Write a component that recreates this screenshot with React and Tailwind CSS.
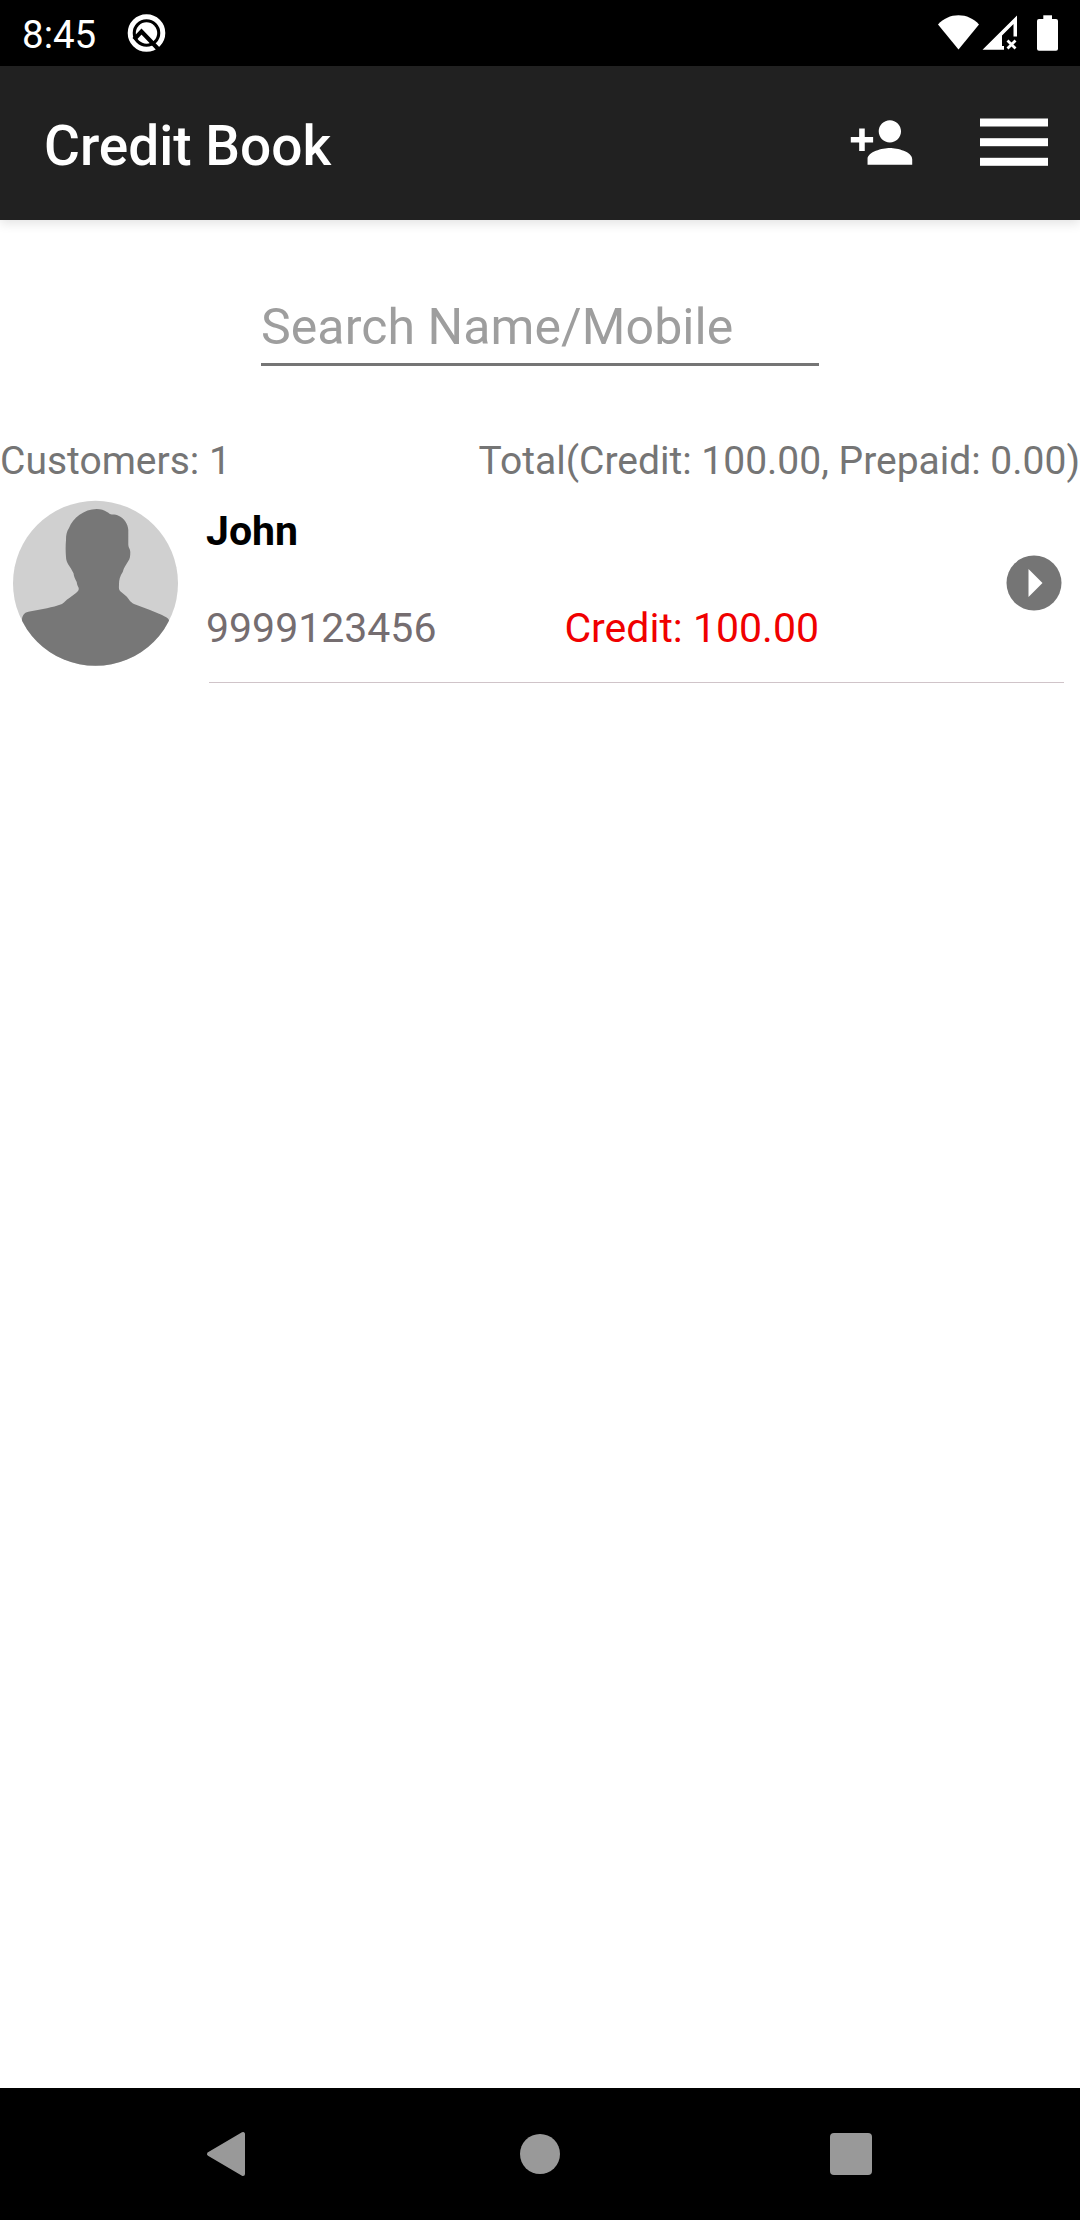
const customers = [
  { id: 1, name: 'John', mobile: '9999123456', balance: 'Credit: 100.00' },
];

function StatusBar() {
  return (
    <div className="flex h-[66px] shrink-0 items-start bg-black text-white">
      <span className="ml-[22px] mt-3 text-[38.5px] leading-[45px]">8:45</span>
      <svg className="ml-[30px] mt-3.5" width="40" height="40" viewBox="0 0 40 40">
        <circle cx="20.5" cy="19" r="16.3" fill="none" stroke="#fff" strokeWidth="5" />
        <circle cx="20.5" cy="19" r="10.7" fill="#fff" />
        <path d="M8 25.5L15.5 17.5L36 39" fill="none" stroke="#000" strokeWidth="4.2" />
      </svg>
      <div className="ml-auto mr-[22px] mt-[15px] flex items-start">
        {/* wifi */}
        <svg width="41" height="35" viewBox="0 0 41 35">
          <path d="M0 9.5C5.5 3.6 12.5 0.3 20.5 0.3S35.5 3.6 41 9.5L20.5 34.5Z" fill="#fff" />
        </svg>
        {/* mobile signal, no service */}
        <svg className="ml-[3px]" width="36" height="36" viewBox="0 0 36 36">
          <path d="M35 0.5V21.5H31.5V9L20 20.5V31H22V34.8H0.5Z" fill="#fff" />
          <path d="M25.5 25.5L33.5 33.5M33.5 25.5L25.5 33.5" stroke="#fff" strokeWidth="2.8" />
        </svg>
        {/* battery */}
        <svg className="ml-[19px]" width="21" height="36" viewBox="0 0 21 36">
          <rect x="6.3" y="0.3" width="8.7" height="6" fill="#fff" />
          <rect x="0" y="4" width="21" height="31.7" rx="2" fill="#fff" />
        </svg>
      </div>
    </div>
  );
}

function AppBar() {
  return (
    <header className="flex h-[154px] shrink-0 items-center bg-[#212121] pl-11 pr-8 text-white shadow-[0_3px_11px_rgba(0,0,0,0.12)]">
      <h1 className="mt-1.5 text-[55px] font-medium leading-[64px]">Credit Book</h1>
      <svg className="-mt-px ml-auto" width="67" height="67" viewBox="0 0 24 24" fill="#fff">
        <path d="M15 12c2.21 0 4-1.79 4-4s-1.79-4-4-4-4 1.79-4 4 1.79 4 4 4zm-9-2V7H4v3H1v2h3v3h2v-3h3v-2H6zm9 4c-2.67 0-8 1.34-8 4v2h16v-2c0-2.66-5.33-4-8-4z" />
      </svg>
      <svg className="-mt-0.5 ml-16" width="69" height="48" viewBox="0 0 69 48" fill="#fff">
        <rect x="1" y="0.5" width="68" height="8" />
        <rect x="1" y="20.2" width="68" height="8" />
        <rect x="1" y="39.8" width="68" height="8" />
      </svg>
    </header>
  );
}

function Avatar() {
  return (
    <svg className="-mt-px ml-[13px] shrink-0" width="165" height="166" viewBox="0 0 165 166">
      <defs>
        <clipPath id="avatar">
          <circle cx="82.5" cy="83.3" r="82.5" />
        </clipPath>
      </defs>
      <g clipPath="url(#avatar)">
        <rect width="165" height="166" fill="#d0d0d0" />
        <path
          d="M83.7 9C88 9 91 10 94 12C96 13 97 14.5 99 14.5C102 14.5 104 14.5 106 16C111 18 115 24 115.3 30V45C115.5 48 117.3 49 117.3 52C117.3 56 117 59 115.3 61C113 65 111 67 109.7 72C107 76 106 80 106 84C106 87 105.5 89 107 91C109 93 111 94 113 96C116 99 117 102 121 104L137 110L149 115C152 116.5 155 118 156 120V166H9V120C9 116 11 112.5 15.3 111.7L34 108.3C39 107 44 106 49 104C52 102 53 100 56 98.3L63 93C65 91.5 66 90 65.7 88C65 86 64 85 63.7 82C62 79 61 77 60.5 73.3C59 70 57 67 55.3 64.5C54 62 53 60 53 57C52.5 51 52.5 46 53 40C53 35 53.5 32 56 28C60 18 71 9 83.7 9Z"
          fill="#777"
        />
      </g>
    </svg>
  );
}

function CustomerRow({ customer }) {
  return (
    <li className="flex h-[182px] items-start">
      <Avatar />
      <div className="ml-[31px] mr-4 flex h-[182px] grow border-b border-[#d0c4c9]">
        <div className="flex w-[610px] flex-col text-[41px] leading-[48px]">
          <p className="-ml-[3px] mt-1.5 font-bold text-black">{customer.name}</p>
          <div className="-ml-[3px] mt-[49px] flex justify-between">
            <span className="text-[#756d70]">{customer.mobile}</span>
            <span className="text-[#f00000]">{customer.balance}</span>
          </div>
        </div>
        <svg className="ml-auto mr-0.5 mt-[54px]" width="56" height="56" viewBox="0 0 56 56">
          <circle cx="28" cy="28" r="27.5" fill="#757575" />
          <path d="M22.5 14L36.5 28L22.5 42Z" fill="#fff" />
        </svg>
      </div>
    </li>
  );
}

function NavBar() {
  return (
    <nav className="flex h-[132px] shrink-0 items-center justify-between bg-black pl-[206px] pr-[208px]">
      <svg width="40" height="46" viewBox="0 0 40 46">
        <path d="M3 23L37 3V43Z" fill="#999" stroke="#999" strokeWidth="4" strokeLinejoin="round" />
      </svg>
      <span className="ml-1 size-10 rounded-full bg-[#999]" />
      <span className="size-[42px] rounded bg-[#999]" />
    </nav>
  );
}

export default function App() {
  return (
    <div className="flex h-[2220px] w-[1080px] flex-col overflow-hidden bg-white font-['Roboto',sans-serif]">
      <StatusBar />
      <AppBar />
      <main className="flex grow flex-col">
        <input
          type="text"
          placeholder="Search Name/Mobile"
          className="mx-auto mt-[70px] h-[76px] w-[558px] border-b-[3px] border-[#757575] text-[50px] leading-[58px] tracking-[0.08px] outline-none placeholder:text-[#9e9e9e]"
        />
        <div className="mt-[73px] flex justify-between whitespace-nowrap text-[39px] leading-[45px] text-[#757575]">
          <span>Customers: 1</span>
          <span>Total(Credit: 100.00, Prepaid: 0.00)</span>
        </div>
        <ul className="mt-[17px]">
          {customers.map((customer) => (
            <CustomerRow key={customer.id} customer={customer} />
          ))}
        </ul>
      </main>
      <NavBar />
    </div>
  );
}
